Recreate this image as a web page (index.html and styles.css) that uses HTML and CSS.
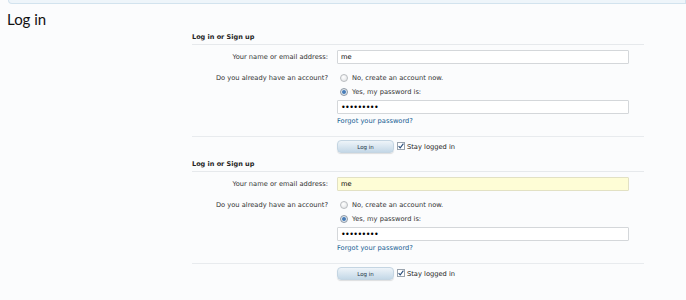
FILE: index.html
```html
<!DOCTYPE html>
<html lang="en">
<head>
    <meta charset="UTF-8">
    <title>Log in</title>
    <link rel="stylesheet" href="styles.css">
</head>
<body>
    <div class="topbar"></div>
    <h1 class="page-title">Log in</h1>

    <form class="login-form">
        <h2 class="form-title">Log in or Sign up</h2>
        <div class="row">
            <label class="label">Your name or email address:</label>
            <div class="field"><input class="text" type="text" value="me"></div>
        </div>
        <div class="row account">
            <label class="label">Do you already have an account?</label>
            <div class="field">
                <div class="choice"><span class="radio"></span>No, create an account now.</div>
                <div class="choice"><span class="radio on"></span>Yes, my password is:</div>
                <input class="text pass" type="password" value="password1">
                <a class="forgot" href="#">Forgot your password?</a>
            </div>
        </div>
        <div class="submit-row">
            <button class="btn" type="button">Log in</button>
            <span class="check"><svg width="8" height="8" viewBox="0 0 8 8"><path d="M1.6 4.2 L3.2 5.9 L6.4 1.6" fill="none" stroke="#2a4d7a" stroke-width="1.1"/></svg></span>
            <span class="stay">Stay logged in</span>
        </div>
    </form>

    <form class="login-form">
        <h2 class="form-title">Log in or Sign up</h2>
        <div class="row">
            <label class="label">Your name or email address:</label>
            <div class="field"><input class="text focus" type="text" value="me"></div>
        </div>
        <div class="row account">
            <label class="label">Do you already have an account?</label>
            <div class="field">
                <div class="choice"><span class="radio"></span>No, create an account now.</div>
                <div class="choice"><span class="radio on"></span>Yes, my password is:</div>
                <input class="text pass" type="password" value="password1">
                <a class="forgot" href="#">Forgot your password?</a>
            </div>
        </div>
        <div class="submit-row">
            <button class="btn" type="button">Log in</button>
            <span class="check"><svg width="8" height="8" viewBox="0 0 8 8"><path d="M1.6 4.2 L3.2 5.9 L6.4 1.6" fill="none" stroke="#2a4d7a" stroke-width="1.1"/></svg></span>
            <span class="stay">Stay logged in</span>
        </div>
    </form>
</body>
</html>
```

FILE: styles.css
```css
body {
    margin: 0;
    background-color: #fbfcfd;
    color: #222;
    font-family: "DejaVu Sans", Verdana, sans-serif;
    font-size: 6.7px;
}
.topbar {
    margin-left: 8px;
    height: 3px;
    background: #eef5fa;
    border: 1px solid #d2e3ee;
    border-top: none;
    border-radius: 0 0 0 4px;
}
.page-title {
    font-family: Lato, "Liberation Sans", sans-serif;
    font-weight: normal;
    font-size: 15px;
    color: #111;
    margin: 6px 0 0 7px;
    line-height: 18px;
}
.login-form {
    margin-left: 192px;
    width: 452px;
}
.form-title {
    font-size: 6.5px;
    font-weight: bold;
    color: #222;
    margin: 5px 0 0;
    padding-bottom: 2px;
    line-height: 9px;
    border-bottom: 1px solid #e6e9ec;
}
.row {
    display: flex;
    margin-top: 5px;
}
.row.account {
    margin-top: 7px;
}
.label {
    width: 136px;
    padding-right: 9px;
    text-align: right;
    line-height: 14px;
    color: #333;
}
.field {
    width: 292px;
    display: flex;
    flex-direction: column;
}
.text {
    box-sizing: border-box;
    width: 292px;
    height: 14px;
    margin: 0;
    padding: 0 3px;
    border: 1px solid #d4d7da;
    border-radius: 1px;
    background: #fff;
    font-family: "DejaVu Sans", Verdana, sans-serif;
    font-size: 6.7px;
    color: #000;
    outline: none;
}
.text.focus {
    background: #fefdd6;
    border-color: #e2e1c4;
}
.text.pass {
    margin-top: 1px;
    font-size: 8px;
    letter-spacing: -0.6px;
}
.choice {
    display: flex;
    align-items: center;
    height: 14px;
    color: #333;
}
.radio {
    width: 6px;
    height: 6px;
    border-radius: 50%;
    border: 1px solid #b9bcbf;
    background: radial-gradient(circle at 40% 35%, #fff, #dcdfe2);
    margin: 0 4px 0 3px;
}
.radio.on {
    background: radial-gradient(circle, #3a6ea8 0, #5b8dc4 1.6px, #e6eaee 2.4px, #cfd4d9 100%);
    border-color: #8d99a6;
}
.forgot {
    color: #176093;
    text-decoration: none;
    line-height: 15px;
}
.submit-row {
    display: flex;
    align-items: center;
    border-top: 1px solid #e8ebee;
    margin: 7px 0 7px;
    padding: 3px 0 0 145px;
}
.btn {
    width: 57px;
    height: 13px;
    padding: 0;
    border: 1px solid #c4d5e2;
    border-radius: 4px;
    background: linear-gradient(#eef4f9, #c4d8e7);
    box-shadow: 0 1px 1px rgba(0, 0, 0, 0.12);
    font-family: "DejaVu Sans", Verdana, sans-serif;
    font-size: 5.5px;
    color: #234;
}
.check {
    width: 8px;
    height: 8px;
    box-sizing: border-box;
    border: 1px solid #9aa4ae;
    background: #fff;
    margin: -2px 2px 0 3px;
    display: flex;
}
.check svg {
    display: block;
    margin: -1px;
}
.stay {
    color: #222;
}
```
